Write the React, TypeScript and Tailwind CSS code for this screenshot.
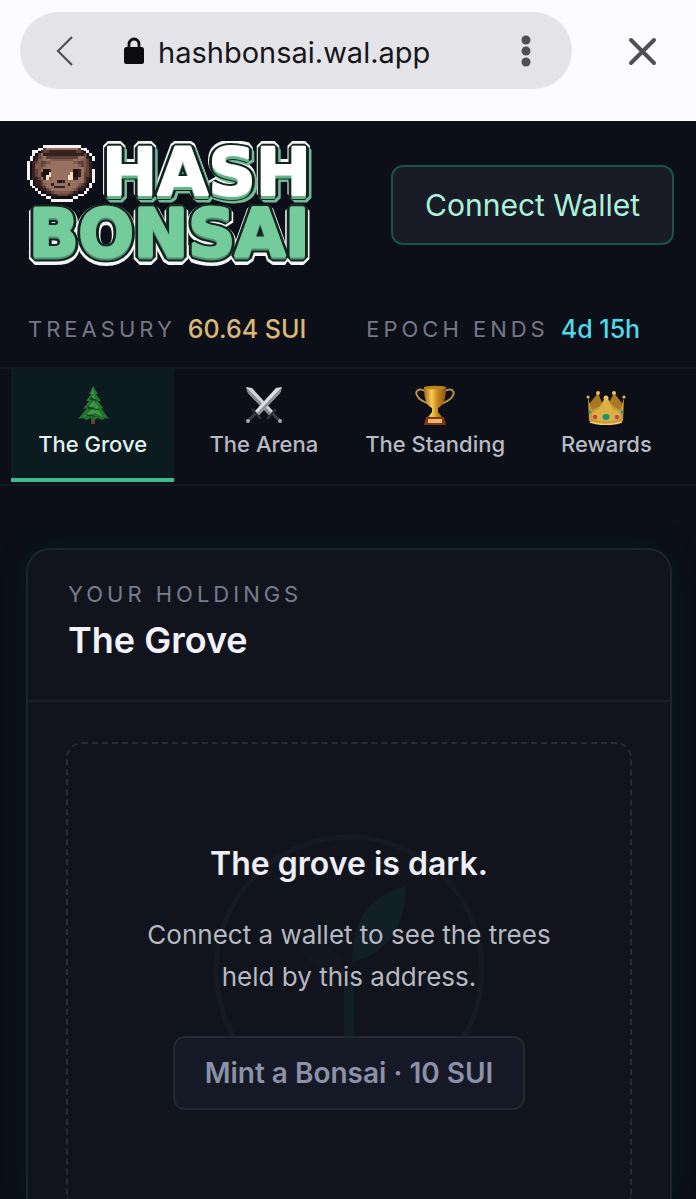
import { useState } from "react";

const PIXEL_COLORS: Record<string, string> = {
  W: "#f4f1f2",
  d: "#35211f",
  m: "#5f4038",
  b: "#80594d",
  l: "#987060",
  e: "#f3dcc0",
  k: "#1a1214",
};

const FACE = [
  "......WWWWWWWWWWWWWW.....",
  "....WWmllllllllllllmWW...",
  "..WW.dmmddddddddddmmd.W..",
  "..W.mldddddddddddddddm.W.",
  ".W.dmblmmmmmmmmmmmmllbd.W",
  ".W.dbblllbbbbbbbblllbbm.W",
  "W.dmbmmbbllllllllbbmmbmd.",
  "W.dbbmbllllllllllllbmbmd.",
  "W.dbbblllllllllllllllbmd.",
  "W.dmblkkdllllllllkkdlbmdW",
  "W.dmbdkkelllllllekkdlmmdW",
  "W.dmbdkeelllllleekkdlmmdW",
  "W.ddmldeblllllleeddllmd.W",
  ".W.ddmllllldkdlllllllmd.W",
  ".W.ddmblldllllldlllbmd.W.",
  "..W.ddmlllddddllllbmdd.W.",
  "...W.ddmbllllllllbmdd.W..",
  "....W..ddmbbbbbbmdd..W...",
  ".....WW..ddmmmmdd..WW....",
  ".......WW........WW......",
  ".........WWWWWWWW........",
];

const Logo = () => (
  <svg viewBox="0 0 290 128" className="w-[290px] h-auto shrink-0" role="img" aria-label="Hash Bonsai">
    <defs>
      <text id="hash" x="76" y="54" fontFamily="DejaVu Sans" fontWeight="bold" fontSize="66">HASH</text>
      <text id="bonsai" x="3" y="115" fontFamily="DejaVu Sans" fontWeight="bold" fontSize="65">BONSAI</text>
    </defs>
    <g transform="translate(1 4) scale(2.7)" shapeRendering="crispEdges">
      {FACE.map((row, y) =>
        row.split("").map((c, x) =>
          c === "." ? null : (
            <rect key={`${x}-${y}`} x={x} y={y} width="1.05" height="1.05" fill={PIXEL_COLORS[c]} />
          )
        )
      )}
    </g>
    <g strokeLinejoin="bevel">
      <use href="#bonsai" y="3" fill="#f2f7f4" stroke="#f2f7f4" strokeWidth="12" />
      <use href="#bonsai" y="1" fill="#14231f" stroke="#14231f" strokeWidth="9" />
      <use href="#hash" y="-1" fill="#f2f7f4" stroke="#f2f7f4" strokeWidth="10" />
      <use href="#hash" x="2" y="3" fill="#75b99a" stroke="#75b99a" strokeWidth="9" />
      <use href="#hash" y="1" fill="#14231f" stroke="#14231f" strokeWidth="8" />
      <use href="#hash" y="3" fill="#63b58b" stroke="#63b58b" strokeWidth="2" />
      <use href="#hash" fill="#ffffff" stroke="#ffffff" strokeWidth="2" />
      <use href="#bonsai" y="2" fill="#4b8f6d" stroke="#4b8f6d" strokeWidth="3" />
      <use href="#bonsai" fill="#74cb9b" stroke="#74cb9b" strokeWidth="3" />
    </g>
  </svg>
);

const TreeIcon = () => (
  <svg viewBox="0 0 40 40" className="w-10 h-10">
    <path d="M18 33h4v6h-4z" fill="#5b4335" />
    <path d="M20 1l-4 8 2 0-5 7 3 0-6 8 4-1-9 11 5-1 3 2 5-2 3 2 4-2 4 2 3-2 4 1-8-11 3 1-6-8 3 0-5-7 2 0z" fill="#23732f" />
    <path d="M20 3l-2 7 4-2-6 8 7-3-9 11 10-4-14 12 12-4 8 4-5-7-4 1 5-4-3-4-2 1 1-5z" fill="#4aa64e" opacity=".75" />
    <path d="M18 12l7 4-8-1zM14 21l13 4-12-1zM12 29l16 3-14-1z" fill="#10431c" />
  </svg>
);

const SwordsIcon = () => (
  <svg viewBox="0 0 40 40" className="w-10 h-10">
    <path d="M8 24l9 10M32 24l-9 10" stroke="#2b2d35" strokeWidth="3" />
    <path d="M11 29l-7 7M29 29l7 7" stroke="#3b3e47" strokeWidth="3" />
    <circle cx="4" cy="36" r="2" fill="#a4a8b0" />
    <circle cx="36" cy="36" r="2" fill="#a4a8b0" />
    <path d="M2 2l6 1 21 23-4 4L4 8z" fill="#d2d4d9" />
    <path d="M2 2l25 26-2 2L4 8z" fill="#858992" />
    <path d="M38 2l-6 1L11 26l4 4L36 8z" fill="#dcdee2" />
    <path d="M38 2L13 28l2 2L36 8z" fill="#8d9199" />
  </svg>
);

const TrophyIcon = () => (
  <svg viewBox="0 0 40 40" className="w-10 h-10">
    <defs>
      <linearGradient id="gold">
        <stop stopColor="#a86913" />
        <stop offset=".35" stopColor="#f6cd50" />
        <stop offset=".6" stopColor="#c98a20" />
        <stop offset="1" stopColor="#8c530f" />
      </linearGradient>
    </defs>
    <path d="M10 6C3 2-1 7 3 12c2 3 6 5 11 7M30 6c7-4 11 1 7 6-2 3-6 5-11 7" fill="none" stroke="#b9934a" strokeWidth="2" />
    <path d="M9 2h22c0 11-2 18-8 21v4l4 5H13l4-5v-4C11 20 9 13 9 2z" fill="url(#gold)" />
    <ellipse cx="20" cy="2.5" rx="11" ry="1.8" fill="#bd8423" />
    <path d="M11 32h18l2 8H9z" fill="#793a16" />
    <path d="M13 34h14v4H13z" fill="#f4b26c" />
  </svg>
);

const CrownIcon = () => (
  <svg viewBox="0 0 40 40" className="w-10 h-10">
    <path d="M4 18l8-10 7 17 9-17 8 10-2 17H6z" fill="#a97823" />
    <path d="M2 13l4 12 8-4 6-10 7 10 7 4 4-12-1 23q-17 7-34 0z" fill="#c99a35" />
    <path d="M20 12l-7 12-7 4v6q14 5 28 0v-6l-7-4z" fill="#e0ba4c" opacity=".7" />
    <g fill="#e8c35b">
      <circle cx="2" cy="12" r="1.5" />
      <circle cx="12" cy="8" r="2" />
      <circle cx="28" cy="8" r="2" />
      <circle cx="38" cy="12" r="1.5" />
      <circle cx="20" cy="13" r="2.5" />
    </g>
    <ellipse cx="20" cy="32" rx="3.5" ry="3" fill="#16917b" />
    <circle cx="9" cy="32" r="2.3" fill="#c34350" />
    <circle cx="31" cy="32" r="2.3" fill="#c34370" />
    <circle cx="4" cy="27" r="1.5" fill="#259384" />
    <circle cx="36" cy="27" r="1.5" fill="#259384" />
    <path d="M4 37q16 5 32 0" stroke="#f0cf69" strokeWidth="1.5" fill="none" />
  </svg>
);

const tabs = [
  { label: "The Grove", Icon: TreeIcon },
  { label: "The Arena", Icon: SwordsIcon },
  { label: "The Standing", Icon: TrophyIcon },
  { label: "Rewards", Icon: CrownIcon },
];

const BrowserBar = () => (
  <div className="flex items-center bg-[#fcfbff] pt-3 pb-8 pl-5 pr-[34px] text-[#505054]">
    <div className="flex flex-1 min-w-0 items-center h-[77px] rounded-full bg-[#e4e3e7] pl-9 pr-9">
      <button aria-label="Back" className="shrink-0 cursor-pointer">
        <svg viewBox="0 0 18 30" className="w-[18px] h-[30px]" fill="none" stroke="currentColor" strokeWidth="2.2">
          <path d="M16 1L2 15l14 14" />
        </svg>
      </button>
      <svg viewBox="0 0 20 28" className="w-5 h-7 ml-[50px] shrink-0">
        <path d="M5 12V7a5 5 0 0110 0v5" fill="none" stroke="#0c0c10" strokeWidth="2.8" />
        <rect x="0" y="10" width="20" height="17" rx="2.5" fill="#0c0c10" />
      </svg>
      <span className="ml-3.5 pt-1 flex-1 min-w-0 truncate text-[29px] leading-10 text-[#15151a]">hashbonsai.wal.app</span>
      <button aria-label="Menu" className="shrink-0 cursor-pointer">
        <svg viewBox="0 0 20 32" className="w-5 h-8" fill="currentColor">
          <circle cx="10" cy="5" r="4.5" />
          <circle cx="10" cy="16" r="4.5" />
          <circle cx="10" cy="27" r="4.5" />
        </svg>
      </button>
    </div>
    <button aria-label="Close" className="ml-[50px] shrink-0 cursor-pointer">
      <svg viewBox="0 0 40 40" className="w-10 h-10" fill="none" stroke="currentColor" strokeWidth="4" strokeLinecap="round">
        <path d="M9 9l23 23M32 9L9 32" />
      </svg>
    </button>
  </div>
);

export default function App() {
  const [active, setActive] = useState("The Grove");

  return (
    <div className="min-h-screen flex flex-col bg-[#0c0f18] font-['Inter',sans-serif]">
      <BrowserBar />

      <header>
        <div className="flex items-center justify-between gap-4 pl-[26px] pr-[22px] pt-5">
          <Logo />
          <button className="h-20 px-8 rounded-xl border-2 border-[#1b514b] bg-[#191c27] text-[30px] leading-10 text-[#aaf3d9] whitespace-nowrap cursor-pointer">
            Connect Wallet
          </button>
        </div>

        <div className="flex flex-wrap gap-x-[60px] pl-7 pr-4 pt-10 pb-[18px] leading-10 whitespace-nowrap">
          <div className="flex items-center gap-3">
            <span className="text-[22px] tracking-[4px] text-[#777786]">TREASURY</span>
            <span className="text-[25px] font-medium text-[#d9b978]">60.64 SUI</span>
          </div>
          <div className="flex items-center gap-3">
            <span className="text-[22px] tracking-[4px] text-[#777786]">EPOCH ENDS</span>
            <span className="text-[25px] font-medium text-[#50dbea]">4d 15h</span>
          </div>
        </div>

        <nav className="grid grid-cols-4 gap-2 pl-[11px] pr-2 pb-0.5 border-y-2 border-[#141720]">
          {tabs.map(({ label, Icon }) => (
            <button
              key={label}
              onClick={() => setActive(label)}
              className={`flex flex-col items-center gap-[3px] pt-4 pb-[18px] border-b-4 text-[22px] leading-8 font-medium whitespace-nowrap cursor-pointer ${
                active === label
                  ? "bg-[#0c1b20] border-[#3dbb90] text-[#e2f1ef]"
                  : "border-transparent text-[#b8bac5]"
              }`}
            >
              <Icon />
              {label}
            </button>
          ))}
        </nav>
      </header>

      <main className="flex-1 flex flex-col pt-[62px] pl-[26px] pr-6">
        <section className="flex-1 flex flex-col rounded-t-3xl border-2 border-b-0 border-[#17272d] bg-[#11141d] shadow-[0_0_24px_#08191e]">
          <div className="px-10 pt-[26px] pb-9 border-b-2 border-[#1a1e27]">
            <p className="text-[22px] leading-9 tracking-[4px] text-[#777c8d]">YOUR HOLDINGS</p>
            <h1 className="mt-1 text-[36px] leading-[48px] font-semibold text-[#f1f2fa]">The Grove</h1>
          </div>

          <div className="flex-1 flex flex-col pt-10 px-[38px]">
            <div className="relative flex-1 flex flex-col items-center pt-24 pb-20 px-4 text-center rounded-t-2xl border-2 border-b-0 border-dashed border-[#282c35]">
              <svg viewBox="0 0 272 272" className="absolute top-[90px] left-1/2 -translate-x-1/2 w-[272px] h-[272px]" fill="none">
                <circle cx="136" cy="136" r="133" stroke="#161a22" strokeWidth="5" />
                <path d="M136 250V145" stroke="#111e25" strokeWidth="10" />
                <path d="M139 128C139 84 158 61 193 52c0 37-16 67-54 76z" fill="#111f26" />
                <path d="M133 144C128 116 109 102 87 98c0 29 20 43 46 46z" fill="#13171f" />
              </svg>
              <h2 className="relative text-[32px] leading-[48px] font-semibold text-[#eeeef7]">The grove is dark.</h2>
              <p className="relative mt-[26px] max-w-[430px] text-[26px] leading-[42px] text-[#b6b8c2]">
                Connect a wallet to see the trees held by this address.
              </p>
              <button className="relative mt-[38px] h-[74px] px-[30px] rounded-xl border-2 border-[#242832] bg-[#151925] text-[28px] leading-9 font-semibold text-[#8b91a7] whitespace-nowrap cursor-pointer">
                Mint a Bonsai · 10 SUI
              </button>
            </div>
          </div>
        </section>
      </main>
    </div>
  );
}
